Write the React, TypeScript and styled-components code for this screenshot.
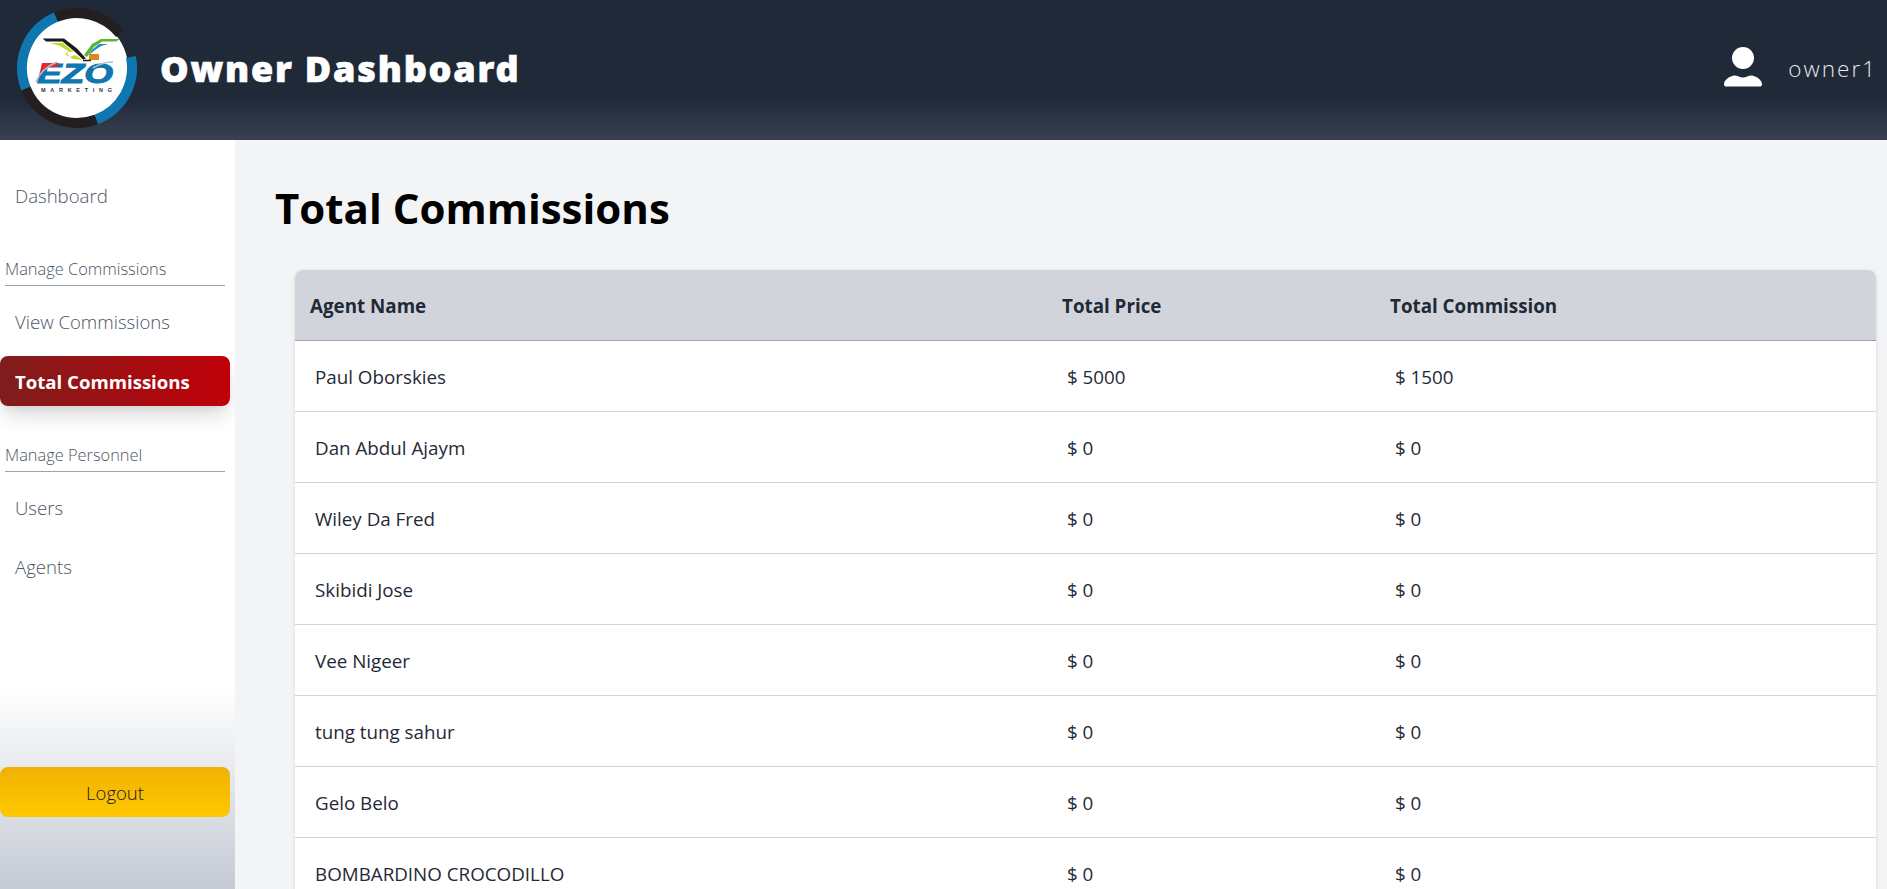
import React from "react";
import styled, { createGlobalStyle } from "styled-components";

const Global = createGlobalStyle`
  html, body { margin: 0; padding: 0; height: 100%; overflow: hidden; }
  body { font-family: "Open Sans", "Noto Sans", "Liberation Sans", sans-serif; background: #f3f4f6; }
  * { box-sizing: border-box; }
`;

const Page = styled.div`
  display: flex;
  flex-direction: column;
  height: 100vh;
  overflow: hidden;
`;

const Header = styled.header`
  flex: 0 0 140px;
  display: flex;
  align-items: center;
  justify-content: space-between;
  padding: 0 10px 4px 17px;
  background: linear-gradient(to bottom, #1f2937 70%, #374151 100%);
`;

const Brand = styled.div`
  display: flex;
  align-items: center;
  gap: 23px;
`;

const LogoSvg = styled.svg`
  display: block;
  width: 120px;
  height: 120px;
`;

const BrandTitle = styled.h1`
  margin: 2px 0 0;
  font-family: "Noto Sans", "Open Sans", sans-serif;
  font-size: 36px;
  font-weight: 900;
  letter-spacing: 1.8px;
  color: #ffffff;
  line-height: 48px;
  -webkit-text-stroke: 0.7px #ffffff;
`;

const UserBox = styled.div`
  display: flex;
  align-items: center;
  gap: 25px;
`;

const UserIcon = styled.svg`
  display: block;
  width: 40px;
  height: 44px;
  margin-bottom: 2px;
`;

const UserName = styled.span`
  font-size: 22.5px;
  font-weight: 300;
  letter-spacing: 2px;
  color: #e5e7eb;
`;

const Body = styled.div`
  flex: 1;
  display: flex;
  min-height: 0;
`;

const Sidebar = styled.aside`
  flex: 0 0 235px;
  display: flex;
  flex-direction: column;
  padding: 30.5px 0 72px;
  background: linear-gradient(to bottom, #ffffff 73%, #c5cad4 100%);
`;

const NavItem = styled.a<{ $active?: boolean }>`
  display: flex;
  align-items: center;
  flex: 0 0 50px;
  width: 230px;
  padding-left: 15px;
  margin-bottom: 9.6px;
  border-radius: 8px;
  font-size: 18.6px;
  font-weight: ${(p) => (p.$active ? 700 : 300)};
  color: ${(p) => (p.$active ? "#ffffff" : "#4b5563")};
  background: ${(p) => (p.$active ? "linear-gradient(to right, #7f1d1d, #c00008)" : "transparent")};
  box-shadow: ${(p) => (p.$active ? "0 12px 22px -4px rgba(0,0,0,.16), 0 4px 8px -4px rgba(0,0,0,.1)" : "none")};
`;

const SectionLabel = styled.div`
  margin: 26.9px 10px 10.5px 5px;
  padding-bottom: 4px;
  line-height: 24px;
  font-size: 16.4px;
  font-weight: 300;
  color: #4b5563;
  border-bottom: 1px solid #9ca3af;
`;

const LogoutButton = styled.button`
  margin-top: auto;
  flex: 0 0 50px;
  width: 230px;
  border: 0;
  border-radius: 8px;
  font-family: inherit;
  font-size: 18.5px;
  font-weight: 300;
  color: #111827;
  background: linear-gradient(to bottom, #f0b104, #ffc800);
`;

const Main = styled.main`
  flex: 1;
  min-width: 0;
  overflow: hidden;
  padding: 38px 11px 0 40px;
  background: #f3f4f6;
`;

const Title = styled.h2`
  margin: 0 0 32px;
  font-size: 42px;
  line-height: 60px;
  font-weight: 700;
  color: #000000;
`;

const TableCard = styled.div`
  margin-left: 20px;
  border-radius: 8px 8px 0 0;
  overflow: hidden;
  box-shadow: 0 1px 4px rgba(0, 0, 0, 0.12);
`;

const Table = styled.table`
  width: 100%;
  table-layout: fixed;
  border-collapse: separate;
  border-spacing: 0;
  background: #ffffff;
`;

const Th = styled.th`
  height: 71px;
  padding: 1px 0 0 15px;
  text-align: left;
  font-size: 18.8px;
  font-weight: 700;
  color: #1f2937;
  background: #d1d5db;
  border-bottom: 1px solid #9ca3af;
`;

const Td = styled.td`
  height: 71px;
  padding: 1px 0 0 20px;
  font-size: 18.8px;
  font-weight: 400;
  color: #1f2937;
  border-bottom: 1px solid #d1d5db;
`;

const rows = [
  ["Paul Oborskies", "$ 5000", "$ 1500"],
  ["Dan Abdul Ajaym", "$ 0", "$ 0"],
  ["Wiley Da Fred", "$ 0", "$ 0"],
  ["Skibidi Jose", "$ 0", "$ 0"],
  ["Vee Nigeer", "$ 0", "$ 0"],
  ["tung tung sahur", "$ 0", "$ 0"],
  ["Gelo Belo", "$ 0", "$ 0"],
  ["BOMBARDINO CROCODILLO", "$ 0", "$ 0"],
];

function Logo() {
  return (
    <LogoSvg viewBox="0 0 120 120">
      <circle cx="60" cy="60" r="51" fill="#ffffff" />
      <g fill="none" strokeWidth="10">
        <path d="M9 80.6A55 55 0 0 1 39.1 9.1" stroke="#1076b0" />
        <path d="M39.1 9.1A55 55 0 0 1 103.1 25.9" stroke="#231f20" />
        <path d="M113.9 49A55 55 0 0 1 79.2 111.5" stroke="#1076b0" />
        <path d="M79.2 111.5A55 55 0 0 1 9 80.6" stroke="#231f20" />
      </g>
      <path d="M25.7 30.5H47L60 40.5 69 50.5 66 51.5 57 43 45.5 33.5H29Z" fill="#1a1a1a" />
      <path d="M33 35H46L57 44 49 44 53 49 58 47 66 52 56 51 48 46 52 43.5 43 38Z" fill="#c9d62e" />
      <path d="M103 31H84L75 36 67 47 70 49 77 39 85 33.5H99Z" fill="#5cb531" />
      <path d="M91 36H82L75 42 72 47 78 42 84 38Z" fill="#1c8ac4" />
      <rect x="72" y="46" width="10" height="6" fill="#d98a1e" />
      <path d="M66 52.5H74" stroke="#1a1a1a" strokeWidth="1.5" />
      <text
        x="20"
        y="75"
        fontFamily="Liberation Sans, sans-serif"
        fontWeight="700"
        fontStyle="italic"
        fontSize="27"
        fill="#1076b0"
        stroke="#1076b0"
        strokeWidth="1"
        textLength="76"
        lengthAdjust="spacingAndGlyphs"
      >
        EZO
      </text>
      <path d="M25 55H42L40 59H30L23 68Z" fill="#e8262b" />
      <path d="M19 74C23 64 30 58 40 54" fill="none" stroke="#b9bcc4" strokeWidth="1.5" />
      <path d="M76 60C84 55 90 54 96 54" fill="none" stroke="#b9bcc4" strokeWidth="1.5" />
      <text
        x="24"
        y="84"
        fontFamily="Liberation Sans, sans-serif"
        fontWeight="700"
        fontSize="5.5"
        fill="#333333"
        textLength="71"
      >
        MARKETING
      </text>
    </LogoSvg>
  );
}

export default function App() {
  return (
    <Page>
      <Global />
      <Header>
        <Brand>
          <Logo />
          <BrandTitle>Owner Dashboard</BrandTitle>
        </Brand>
        <UserBox>
          <UserIcon viewBox="0 0 40 44">
            <circle cx="20" cy="13" r="11" fill="#ffffff" />
            <path
              d="M1 39.5C1 35 6 31.5 11 30.5 14 30 16.5 32.5 20 32.5S26 30 29 30.5C34 31.5 39 35 39 39.5 39 41 38 41.5 36.5 41.5H3.5C2 41.5 1 41 1 39.5Z"
              fill="#ffffff"
            />
          </UserIcon>
          <UserName>owner1</UserName>
        </UserBox>
      </Header>
      <Body>
        <Sidebar>
          <NavItem>Dashboard</NavItem>
          <SectionLabel>Manage Commissions</SectionLabel>
          <NavItem>View Commissions</NavItem>
          <NavItem $active>Total Commissions</NavItem>
          <SectionLabel>Manage Personnel</SectionLabel>
          <NavItem>Users</NavItem>
          <NavItem>Agents</NavItem>
          <LogoutButton>Logout</LogoutButton>
        </Sidebar>
        <Main>
          <Title>Total Commissions</Title>
          <TableCard>
            <Table>
              <colgroup>
                <col style={{ width: 752 }} />
                <col style={{ width: 328 }} />
                <col />
              </colgroup>
              <thead>
                <tr>
                  <Th>Agent Name</Th>
                  <Th>Total Price</Th>
                  <Th>Total Commission</Th>
                </tr>
              </thead>
              <tbody>
                {rows.map((r) => (
                  <tr key={r[0]}>
                    <Td>{r[0]}</Td>
                    <Td>{r[1]}</Td>
                    <Td>{r[2]}</Td>
                  </tr>
                ))}
              </tbody>
            </Table>
          </TableCard>
        </Main>
      </Body>
    </Page>
  );
}
